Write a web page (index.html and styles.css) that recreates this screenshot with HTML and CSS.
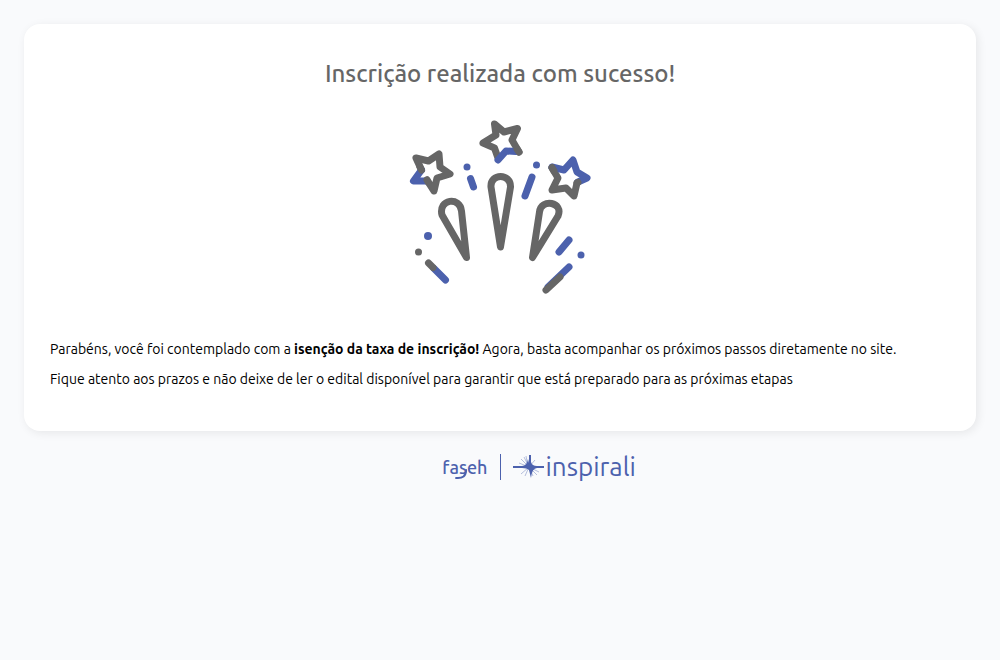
FILE: index.html
```html
<!DOCTYPE html>
<html lang="pt-BR">
<head>
<meta charset="utf-8">
<meta name="viewport" content="width=device-width, initial-scale=1">
<title>Inscrição realizada com sucesso!</title>
<link rel="stylesheet" href="styles.css">
</head>
<body>
<main class="card">
  <h1 class="title">Inscrição realizada com sucesso!</h1>
  <svg class="fireworks" viewBox="0 0 180 175" aria-hidden="true">
    <g class="gray">
      <path d="M11.500 50L6 38L18.500 41L29 34L30 47L40 54L27 58L24 71L17 60"/>
      <path d="M88 38L84.500 28L73 23L86 15L84.500 4L94 12L107.500 8.500L102 20L109 32"/>
      <path d="M167 63L164 76L156 68L142 70L148 58L142 48"/>
      <path d="M32 95C28 79 50 76 51.500 91L56.500 137.500Z"/>
      <path d="M81 67C80 53 101 53 100.500 67L90.500 127Z"/>
      <path d="M129.500 92C131 78 154 82 148 96L122.500 137.500Z"/>
    </g>
    <g class="blue">
      <path d="M11.500 50L3.500 61H16"/>
      <path d="M88 40L96 31L106 31.500"/>
      <path d="M142 47L154 50L163 40L167 52L177 58L168 62"/>
      <path d="M60.500 58.500L63.500 67M122 57L115 76M159 120L149 132M24 148.500L35.500 160M159 147L138 167"/>
    </g>
    <g class="gray">
      <path d="M18.500 143L23 147.500M150 157L136 170M109 32L107 29M142 47.500L144 51M168 62.500L167 63M11.500 50L10 47M17 60L18 62"/>
    </g>
    <g class="dots">
      <circle cx="57" cy="47" r="3.500"/><circle cx="126.500" cy="45" r="3.500"/>
      <circle cx="18" cy="116" r="4"/><circle cx="171" cy="135" r="3.500"/>
      <circle class="dot-gray" cx="8.500" cy="132" r="3.500"/>
    </g>
  </svg>
  <div class="message">
    <p>Parabéns, você foi contemplado com a <strong>isenção da taxa de inscrição!</strong> Agora, basta acompanhar os próximos passos diretamente no site.</p>
    <p>Fique atento aos prazos e não deixe de ler o edital disponível para garantir que está preparado para as próximas etapas</p>
  </div>
</main>
<footer class="brands">
  <span class="faseh">faseh
    <svg class="swash" viewBox="0 0 45 32" aria-hidden="true"><path d="M14 27Q24 28 24 19"/></svg>
  </span>
  <span class="divider"></span>
  <span class="inspirali">
    <svg class="burst" viewBox="0 0 32 24" aria-hidden="true">
      <path class="rays" d="M16 12L8 4M16 12L11 2M16 12L6 8M16 12L8 19M16 12L12 21M16 12L24 20M16 12L20 21M16 12L22 5M16 12L26 17M15 12L13 1"/>
      <path class="core" d="M0 11H9Q14 11 15 4L16 8L16 0H18V7Q19 11 24 11H31V13H24Q19 13 18 23L16 15Q14 13 9 13H0Z"/>
    </svg>
    <span class="inspirali-name">inspirali</span>
  </span>
</footer>
</body>
</html>
```
FILE: styles.css
```css
* { box-sizing: border-box; }
body {
  margin: 0;
  padding: 24px;
  background: #f9fafc;
  color: #000;
  font-family: Ubuntu, "Noto Sans", sans-serif;
  font-size: 14px;
}
.card {
  display: flex;
  flex-direction: column;
  align-items: center;
  padding: 32px 26px 37px;
  border-radius: 16px;
  background: #fff;
  box-shadow: 2px 2px 10px rgba(0, 0, 0, 0.08);
}
.title {
  margin: 0;
  color: #666;
  font-size: 24px;
  font-weight: 500;
  line-height: 36px;
  text-align: center;
}
.fireworks { width: 180px; height: 175px; margin-top: 28px; overflow: visible; }
.gray, .blue {
  fill: none;
  stroke: #666;
  stroke-width: 7;
  stroke-linecap: round;
  stroke-linejoin: round;
}
.blue { stroke: #4c61ad; }
.dots { fill: #4c61ad; }
.dot-gray { fill: #666; }
.message { align-self: stretch; margin-top: 39px; line-height: 30px; }
.message p { margin: 0; }
.brands {
  display: grid;
  grid-template-columns: 1fr auto 1fr;
  align-items: center;
  gap: 12px;
  margin-top: 20px;
  color: #4c61ad;
}
.faseh {
  position: relative;
  justify-self: end;
  font-size: 18px;
  font-weight: 500;
  line-height: 32px;
}
.swash {
  position: absolute;
  inset: 0;
  width: 100%;
  height: 100%;
  fill: none;
  stroke: #4c61ad;
  stroke-width: 2;
  stroke-linecap: round;
}
.divider { width: 1px; height: 26px; background: #4c61ad; }
.inspirali { display: flex; align-items: center; gap: 1px; }
.inspirali-name { font-size: 26px; line-height: 32px; }
.burst { width: 32px; height: 24px; }
.rays { fill: none; stroke: #4c61ad; stroke-opacity: 0.4; }
.core { fill: #4c61ad; }
```
